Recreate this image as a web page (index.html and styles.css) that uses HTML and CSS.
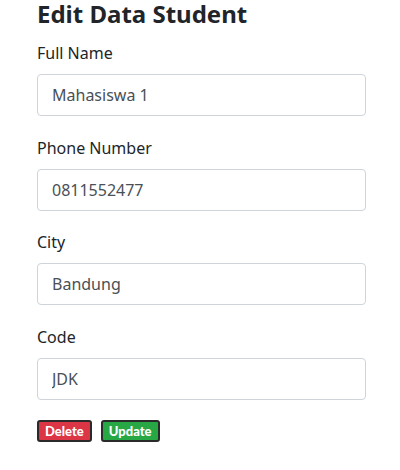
FILE: index.html
```html
<!DOCTYPE html>
<html>
<head>
<meta charset="utf-8">
<link rel="stylesheet" href="styles.css">
</head>
<body>
<div class="container">
  <h3 class="title">Edit Data Student</h3>
  <form class="form">
    <div class="group">
      <label class="label">Full Name</label>
      <input class="control" type="text" value="Mahasiswa 1">
    </div>
    <div class="group">
      <label class="label">Phone Number</label>
      <input class="control" type="text" value="0811552477">
    </div>
    <div class="group">
      <label class="label">City</label>
      <input class="control" type="text" value="Bandung">
    </div>
    <div class="group">
      <label class="label">Code</label>
      <input class="control" type="text" value="JDK">
    </div>
    <div class="actions">
      <button type="button" class="btn btn-danger">Delete</button>
      <button type="button" class="btn btn-success">Update</button>
    </div>
  </form>
</div>
</body>
</html>
```
FILE: styles.css
```css
* { box-sizing: border-box; }
body {
  margin: 0;
  font-family: "Noto Sans", "Open Sans", sans-serif;
  color: #212529;
  background: #fff;
}
.container {
  padding: 0 34px 0 37px;
}
.title {
  margin: 0;
  padding-top: 0;
  font-size: 24px;
  font-weight: 700;
  line-height: 28px;
}
.form {
  display: flex;
  flex-direction: column;
  margin-top: 13px;
}
.group {
  display: flex;
  flex-direction: column;
  margin-bottom: 19.5px;
}
.label {
  font-size: 16px;
  line-height: 24px;
  margin-bottom: 9px;
}
.control {
  width: 329px;
  height: 42px;
  padding: 0 14px;
  font-family: inherit;
  font-size: 16px;
  color: #495057;
  border: 1px solid #ced4da;
  border-radius: 4px;
  background: #fff;
}
.actions {
  display: flex;
  gap: 9px;
  margin-top: 1px;
}
.btn {
  height: 22px;
  padding: 0 6px;
  font-family: "Lato", "Noto Sans", sans-serif;
  font-size: 13px;
  font-weight: 900;
  color: #fff;
  border: 2px solid #2a2a2a;
  border-radius: 3px;
  line-height: 16px;
}
.btn-danger { background: #dc3545; }
.btn-success { background: #28a745; }
```
